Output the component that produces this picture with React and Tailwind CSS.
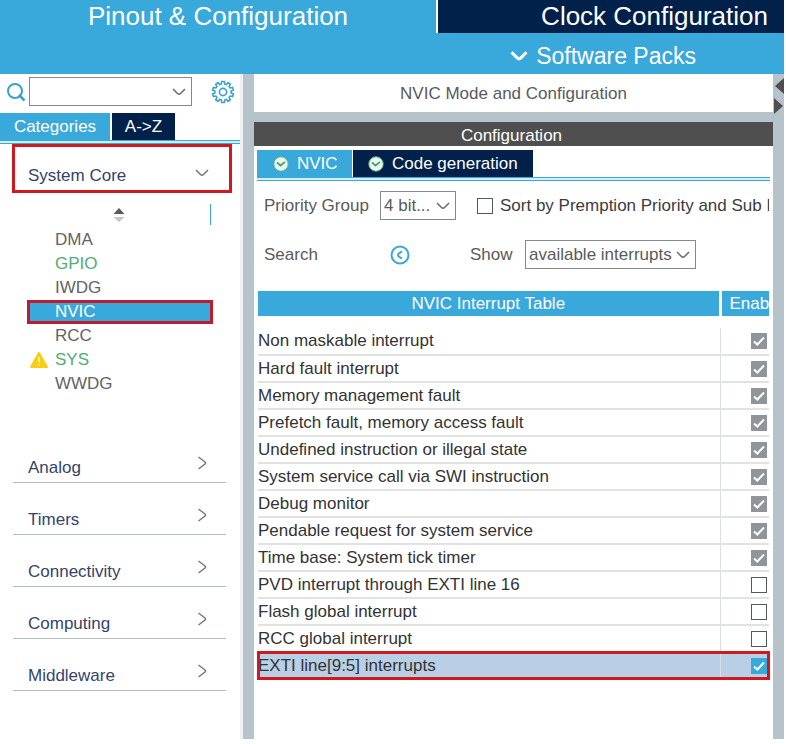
import { useState } from "react";

const peripherals = [
  { name: "DMA" },
  { name: "GPIO", configured: true },
  { name: "IWDG" },
  { name: "NVIC" },
  { name: "RCC" },
  { name: "SYS", configured: true, warning: true },
  { name: "WWDG" },
];

const categories = ["Analog", "Timers", "Connectivity", "Computing", "Middleware"];

const initialInterrupts = [
  { name: "Non maskable interrupt", enabled: true, locked: true },
  { name: "Hard fault interrupt", enabled: true, locked: true },
  { name: "Memory management fault", enabled: true, locked: true },
  { name: "Prefetch fault, memory access fault", enabled: true, locked: true },
  { name: "Undefined instruction or illegal state", enabled: true, locked: true },
  { name: "System service call via SWI instruction", enabled: true, locked: true },
  { name: "Debug monitor", enabled: true, locked: true },
  { name: "Pendable request for system service", enabled: true, locked: true },
  { name: "Time base: System tick timer", enabled: true, locked: true },
  { name: "PVD interrupt through EXTI line 16", enabled: false },
  { name: "Flash global interrupt", enabled: false },
  { name: "RCC global interrupt", enabled: false },
  { name: "EXTI line[9:5] interrupts", enabled: true },
];

function Chevron({ className }) {
  return (
    <svg viewBox="0 0 14 8" className={className} fill="none" stroke="currentColor" aria-hidden="true">
      <path d="M1 1 L5.5 5.5 Q7 7 8.5 5.5 L13 1" />
    </svg>
  );
}

function SelectBox({ label, options, className }) {
  return (
    <span className={`relative inline-flex ${className}`}>
      <select
        aria-label={label}
        className="h-[29px] w-full appearance-none border border-[#85898d] bg-white pl-[3px] pr-5 text-[#5a5a5a] outline-none"
      >
        {options.map((option) => (
          <option key={option}>{option}</option>
        ))}
      </select>
      <Chevron className="pointer-events-none absolute right-1.5 top-[11px] h-2 w-3.5 stroke-[1.5] text-[#6b6b6b]" />
    </span>
  );
}

function CheckBox({ label, checked, disabled, onChange }) {
  return (
    <span className="grid h-4 w-4 shrink-0">
      <input
        type="checkbox"
        aria-label={label}
        checked={checked}
        disabled={disabled}
        onChange={onChange}
        className="peer col-start-1 row-start-1 h-4 w-4 appearance-none border border-[#55585b] bg-white checked:border-[#39a8db] checked:bg-[#39a8db] disabled:border-[#8f959b] disabled:bg-[#8f959b]"
      />
      <svg
        viewBox="0 0 16 16"
        className="pointer-events-none col-start-1 row-start-1 hidden h-4 w-4 peer-checked:block"
        fill="none"
        stroke="white"
        strokeWidth="2"
        aria-hidden="true"
      >
        <path d="M3 8.5 L6.3 11.5 L13 4.5" />
      </svg>
    </span>
  );
}

function StatusIcon() {
  return (
    <svg viewBox="0 0 16 16" className="h-4 w-4" aria-hidden="true">
      <circle cx="8" cy="8" r="7.2" fill="#e9f8ec" stroke="#5fb58a" strokeWidth="1" />
      <path d="M4 6.5 L7.5 9.5 L12 6" fill="none" stroke="#4f9f7c" strokeWidth="1.8" />
    </svg>
  );
}

function GearIcon() {
  const teeth = Array.from({ length: 10 }, (_, i) => {
    const a = (i * 36 * Math.PI) / 180;
    const point = (r, d) => `${12 + r * Math.sin(a + d)} ${12 - r * Math.cos(a + d)}`;
    return `${point(8.2, -0.2)} L${point(10.6, -0.13)} L${point(10.6, 0.13)} L${point(8.2, 0.2)}`;
  });
  return (
    <svg viewBox="0 0 24 24" className="h-6 w-6" fill="none" stroke="#39a0cf" strokeWidth="1.6" aria-hidden="true">
      <path d={`M${teeth.join(" L")} Z`} />
      <circle cx="12" cy="12" r="3.6" />
    </svg>
  );
}

function Header() {
  return (
    <header className="bg-[#39a8db] text-white">
      <div className="flex h-[33px] text-[26px] leading-8">
        <button className="w-[436px] shrink-0 pb-0.5">Pinout &amp; Configuration</button>
        <button className="flex-1 border-l-2 border-white bg-[#02214a] pb-0.5 pr-4 text-right whitespace-nowrap">
          Clock Configuration
        </button>
      </div>
      <div className="flex h-[41px] justify-end pr-[88px]">
        <button className="flex items-center gap-2 pb-0.5 pt-1.5 text-[23px] leading-8">
          <Chevron className="h-2.5 w-[18px] stroke-[2.5]" />
          Software Packs
        </button>
      </div>
    </header>
  );
}

function Sidebar({ selected, onSelect }) {
  return (
    <aside className="w-[243px] shrink-0 border-r-[3px] border-[#eef1f2]">
      <div className="flex h-[39px] items-center pl-1.5 pt-[3px] pb-[7px]">
        <svg viewBox="0 0 20 20" className="h-5 w-5" fill="none" stroke="#39a0cf" strokeWidth="2" aria-hidden="true">
          <circle cx="9" cy="9" r="7" />
          <path d="M13 13 L18.5 18.5" strokeWidth="2.5" />
        </svg>
        <SelectBox label="Find peripheral" options={[""]} className="ml-[3px] w-[163px]" />
        <button aria-label="Settings" className="ml-[19px]">
          <GearIcon />
        </button>
      </div>
      <div className="flex h-[27px] gap-0.5 text-white">
        <button className="w-[110px] bg-[#39a8db]">Categories</button>
        <button className="w-[63px] bg-[#02214a]">A-&gt;Z</button>
      </div>
      <div className="h-1 border-y border-[#39a8db] bg-[#d3eefb]" />

      <button className="ml-3 mr-2 flex h-[49px] w-[220px] items-center justify-between border-[3px] border-[#d0191f] pl-[13px] pr-[19px] pt-3.5 text-[#35446a]">
        System Core
        <Chevron className="mb-1.5 h-2 w-4 stroke-[1.5] text-[#777]" />
      </button>

      <div className="ml-[27px] flex h-[35px] w-[184px] items-center justify-center pt-2">
        <svg viewBox="0 0 12 14" className="ml-auto h-3.5 w-3" aria-hidden="true">
          <path d="M6 0 L11.5 6 H0.5 Z" fill="#5b5b5b" />
          <path d="M6 14 L11.5 9 H0.5 Z" fill="#c4c4c4" />
        </svg>
        <span className="ml-[85px] h-[21px] w-px bg-[#39a8db]" />
      </div>
      <ul className="ml-[27px] w-[186px]">
        {peripherals.map((item) => (
          <li key={item.name}>
            <button
              onClick={() => onSelect(item.name)}
              className={`flex h-6 w-full items-center ${
                item.name === selected
                  ? "border-[3px] border-[#c01a2b] bg-[#39a8db] text-white"
                  : item.configured
                    ? "border-x-[3px] border-transparent text-[#4fae73]"
                    : "border-x-[3px] border-transparent text-[#636363]"
              }`}
            >
              <span className="w-[25px]">
                {item.warning && (
                  <svg viewBox="0 0 18 16" className="h-4 w-[18px]" aria-hidden="true">
                    <path d="M9 1 L17 15 H1 Z" fill="#f6cf14" stroke="#f6cf14" strokeWidth="2" strokeLinejoin="round" />
                    <path d="M9 5 V10.5 M9 12 V13.5" stroke="#fff3b0" strokeWidth="1.6" />
                  </svg>
                )}
              </span>
              {item.name}
            </button>
          </li>
        ))}
      </ul>

      <div className="ml-[13px] mr-3.5 mt-[35px]">
        {categories.map((name) => (
          <button
            key={name}
            className="flex h-[52px] w-full items-end justify-between border-b border-[#b4bcc5] pb-1 pl-[15px] pr-[19px] text-[#35446a]"
          >
            {name}
            <svg viewBox="0 0 10 14" className="mb-2 h-3.5 w-2.5" fill="none" stroke="#777" strokeWidth="1.5" aria-hidden="true">
              <path d="M1.5 1 L8 6 Q9 7 8 8 L1.5 13" />
            </svg>
          </button>
        ))}
      </div>
    </aside>
  );
}

function NvicPanel() {
  const [interrupts, setInterrupts] = useState(initialInterrupts);
  const [sorted, setSorted] = useState(false);

  const toggleInterrupt = (name) => {
    setInterrupts(interrupts.map((row) => (row.name === name ? { ...row, enabled: !row.enabled } : row)));
  };

  return (
    <main className="flex min-w-0 flex-1 flex-col">
      <h1 className="h-[38px] bg-white pt-2.5 text-center text-[#5a5a5a]">NVIC Mode and Configuration</h1>
      <h2 className="mt-2.5 h-6 bg-[#4f4f4f] pt-1 pr-1 text-center text-white">Configuration</h2>
      <section className="flex-1 bg-white px-[3px] pt-1">
        <div className="flex h-[27px] gap-px text-white">
          <button className="flex w-[95px] items-center gap-2 bg-[#39a8db] pl-4">
            <StatusIcon />
            NVIC
          </button>
          <button className="flex w-[180px] items-center gap-2 bg-[#02214a] pl-[15px]">
            <StatusIcon />
            Code generation
          </button>
        </div>
        <div className="h-1 border-y border-[#39a8db] bg-[#d3eefb]" />

        <div className="mr-px mt-2.5 flex h-[29px] items-center overflow-hidden whitespace-nowrap pl-[7px] text-[#5a5a5a]">
          <span className="w-[116px] shrink-0">Priority Group</span>
          <SelectBox label="Priority Group" options={["4 bit..."]} className="w-[76px] shrink-0" />
          <label className="ml-[21px] flex items-center gap-[7px] text-[#3c3c3c]">
            <CheckBox checked={sorted} onChange={() => setSorted(!sorted)} />
            Sort by Premption Priority and Sub Priority
          </label>
        </div>
        <div className="mt-5 flex h-[29px] items-center whitespace-nowrap pl-[7px] text-[#5a5a5a]">
          <span className="w-[126px] shrink-0">Search</span>
          <button aria-label="Previous match">
            <svg viewBox="0 0 20 20" className="h-5 w-5" fill="none" stroke="#39a8db" strokeWidth="2" aria-hidden="true">
              <circle cx="10" cy="10" r="8.5" />
              <path d="M12 6.5 Q8 8.5 8 10 Q8 11.5 12 13.5" />
            </svg>
          </button>
          <span className="ml-[60px] w-[55px]">Show</span>
          <SelectBox label="Show" options={["available interrupts"]} className="w-[171px]" />
        </div>

        <div className="mt-[22px] px-px">
          <table className="w-full table-fixed border-collapse text-[#333]">
            <thead>
              <tr className="h-6 bg-[#39a8db] text-white">
                <th className="p-0 pt-px font-normal leading-6">NVIC Interrupt Table</th>
                <th className="w-[49px] overflow-hidden border-l-[3px] border-white p-0 pl-2 pt-px text-left font-normal leading-6">
                  Enabled
                </th>
              </tr>
            </thead>
            <tbody>
              <tr className="h-3" />
              {interrupts.map((row, i) => {
                const active = i === interrupts.length - 1;
                return (
                  <tr
                    key={row.name}
                    className={
                      active
                        ? "h-[27px] bg-[#b8cfe6] outline-[3px] -outline-offset-2 outline-[#d0191f]"
                        : "h-[27px] border-b-2 border-[#e2e2e2]"
                    }
                  >
                    <td className="p-0 leading-6">{row.name}</td>
                    <td className="border-l border-[#dcdfe2] p-0 pl-[30px]">
                      <CheckBox
                        label={row.name}
                        checked={row.enabled}
                        disabled={row.locked}
                        onChange={() => toggleInterrupt(row.name)}
                      />
                    </td>
                  </tr>
                );
              })}
            </tbody>
          </table>
        </div>
      </section>
    </main>
  );
}

export default function App() {
  const [selected, setSelected] = useState("NVIC");

  return (
    <div className="flex min-h-screen flex-col bg-white pb-[5px] pr-0.5 font-['Liberation_Sans',Arial,sans-serif] text-[17px] leading-5">
      <Header />
      <div className="flex flex-1">
        <Sidebar selected={selected} onSelect={setSelected} />
        <div className="flex min-w-0 flex-1 bg-[#b7c3ca] pl-[11px]">
          <NvicPanel />
          <div className="flex w-[11px] shrink-0 flex-col gap-1 pl-px pt-1">
            <svg viewBox="0 0 10 16" className="h-4 w-2.5" aria-hidden="true">
              <path d="M10 0 V16 L1 8 Z" fill="#4f4f4f" />
            </svg>
            <svg viewBox="0 0 10 16" className="h-4 w-2.5" aria-hidden="true">
              <path d="M0 0 V16 L9 8 Z" fill="#4f4f4f" />
            </svg>
          </div>
        </div>
      </div>
    </div>
  );
}
